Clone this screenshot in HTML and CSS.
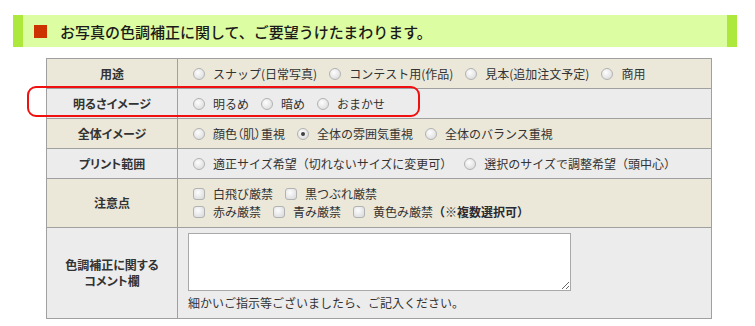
FILE: index.html
```html
<!DOCTYPE html>
<html lang="ja">
<head>
    <meta charset="UTF-8">
    <title>色調補正のご要望</title>
    <link rel="stylesheet" href="styles.css">
</head>
<body>
    <h2 class="section-title"><span class="mark"></span>お写真の色調補正に関して、ご要望うけたまわります。</h2>

    <div class="form-wrap">
        <div class="highlight"></div>
        <table class="order-table">
            <tr class="beige">
                <th>用途</th>
                <td>
                    <div class="choices">
                        <label><input type="radio" name="use">スナップ(日常写真)</label>
                        <label><input type="radio" name="use">コンテスト用(作品)</label>
                        <label><input type="radio" name="use">見本(追加注文予定)</label>
                        <label><input type="radio" name="use">商用</label>
                    </div>
                </td>
            </tr>
            <tr class="gray">
                <th>明るさイメージ</th>
                <td>
                    <div class="choices">
                        <label><input type="radio" name="bright">明るめ</label>
                        <label><input type="radio" name="bright">暗め</label>
                        <label><input type="radio" name="bright">おまかせ</label>
                    </div>
                </td>
            </tr>
            <tr class="beige">
                <th>全体イメージ</th>
                <td>
                    <div class="choices">
                        <label class="tight"><input type="radio" name="image">顔色（肌）重視</label>
                        <label><input type="radio" name="image" checked>全体の雰囲気重視</label>
                        <label><input type="radio" name="image">全体のバランス重視</label>
                    </div>
                </td>
            </tr>
            <tr class="gray">
                <th>プリント範囲</th>
                <td>
                    <div class="choices">
                        <label><input type="radio" name="range">適正サイズ希望（切れないサイズに変更可）</label>
                        <label><input type="radio" name="range">選択のサイズで調整希望（頭中心）</label>
                    </div>
                </td>
            </tr>
            <tr class="beige note-row">
                <th>注意点</th>
                <td>
                    <div class="choices">
                        <label><input type="checkbox">白飛び厳禁</label>
                        <label><input type="checkbox">黒つぶれ厳禁</label>
                    </div>
                    <div class="choices">
                        <label><input type="checkbox">赤み厳禁</label>
                        <label><input type="checkbox">青み厳禁</label>
                        <label><input type="checkbox">黄色み厳禁<strong>（※複数選択可）</strong></label>
                    </div>
                </td>
            </tr>
            <tr class="gray comment-row">
                <th>色調補正に関する<br>コメント欄</th>
                <td>
                    <textarea class="comment"></textarea>
                    <p class="help">細かいご指示等ございましたら、ご記入ください。</p>
                </td>
            </tr>
        </table>
    </div>
</body>
</html>
```

FILE: styles.css
```css
body {
    margin: 0;
    font-family: "Noto Sans CJK JP", sans-serif;
    color: #333;
    background-color: #fff;
}
.section-title {
    display: flex;
    align-items: center;
    height: 32px;
    margin: 15px 18px 0 13px;
    padding-left: 11px;
    background-color: #ddfda2;
    border-left: 10px solid #ade83c;
    border-right: 10px solid #ade83c;
    font-size: 15px;
    font-weight: 500;
    color: #1a1a1a;
}
.mark {
    width: 13px;
    height: 13px;
    margin-right: 13px;
    background-color: #cc3300;
}
.form-wrap {
    position: relative;
    width: 666px;
    margin: 11px 0 0 46px;
}
.highlight {
    position: absolute;
    top: 28px;
    left: -19px;
    width: 389px;
    height: 27px;
    border: 2px solid #f01010;
    border-radius: 9px;
    pointer-events: none;
}
.order-table {
    width: 666px;
    border-collapse: collapse;
    font-size: 12px;
}
.order-table th,
.order-table td {
    border: 1px solid #a0a0a0;
    padding: 0;
}
.order-table tr {
    height: 30px;
}
.order-table th {
    width: 130px;
    text-align: center;
    font-weight: bold;
    line-height: 16px;
    font-feature-settings: "palt";
}
.order-table td {
    padding-left: 15px;
}
.beige {
    background-color: #ebe8d9;
}
.gray {
    background-color: #ececec;
}
.choices {
    display: flex;
    align-items: center;
    gap: 12px;
    line-height: 18px;
}
.choices label {
    display: flex;
    align-items: center;
}
.choices .tight {
    font-feature-settings: "palt";
}
.choices strong {
    color: #2a2a33;
}
.choices input {
    appearance: none;
    width: 12px;
    height: 12px;
    margin: 0 8px 0 0;
    border: 1px solid #b2b2b2;
    background: radial-gradient(circle at 40% 35%, #fdfdfd, #d6d6d6);
    position: relative;
}
.choices input[type="radio"] {
    border-radius: 50%;
}
.choices input[type="checkbox"] {
    border-radius: 3px;
}
.choices input:checked::after {
    content: "";
    position: absolute;
    top: 3px;
    left: 3px;
    width: 4px;
    height: 4px;
    border-radius: 50%;
    background-color: #404040;
}
.order-table .note-row {
    height: 49px;
}
.order-table .comment-row {
    height: 91px;
}
.comment-row td {
    padding: 5px 0 0 10px;
    vertical-align: top;
}
.comment {
    display: block;
    width: 383px;
    height: 58px;
    margin: 0;
    padding: 2px;
    box-sizing: border-box;
    border: 1px solid #a9a9a9;
    background-color: #fff;
}
.help {
    margin: 5px 0 0;
    line-height: 14px;
}
```
